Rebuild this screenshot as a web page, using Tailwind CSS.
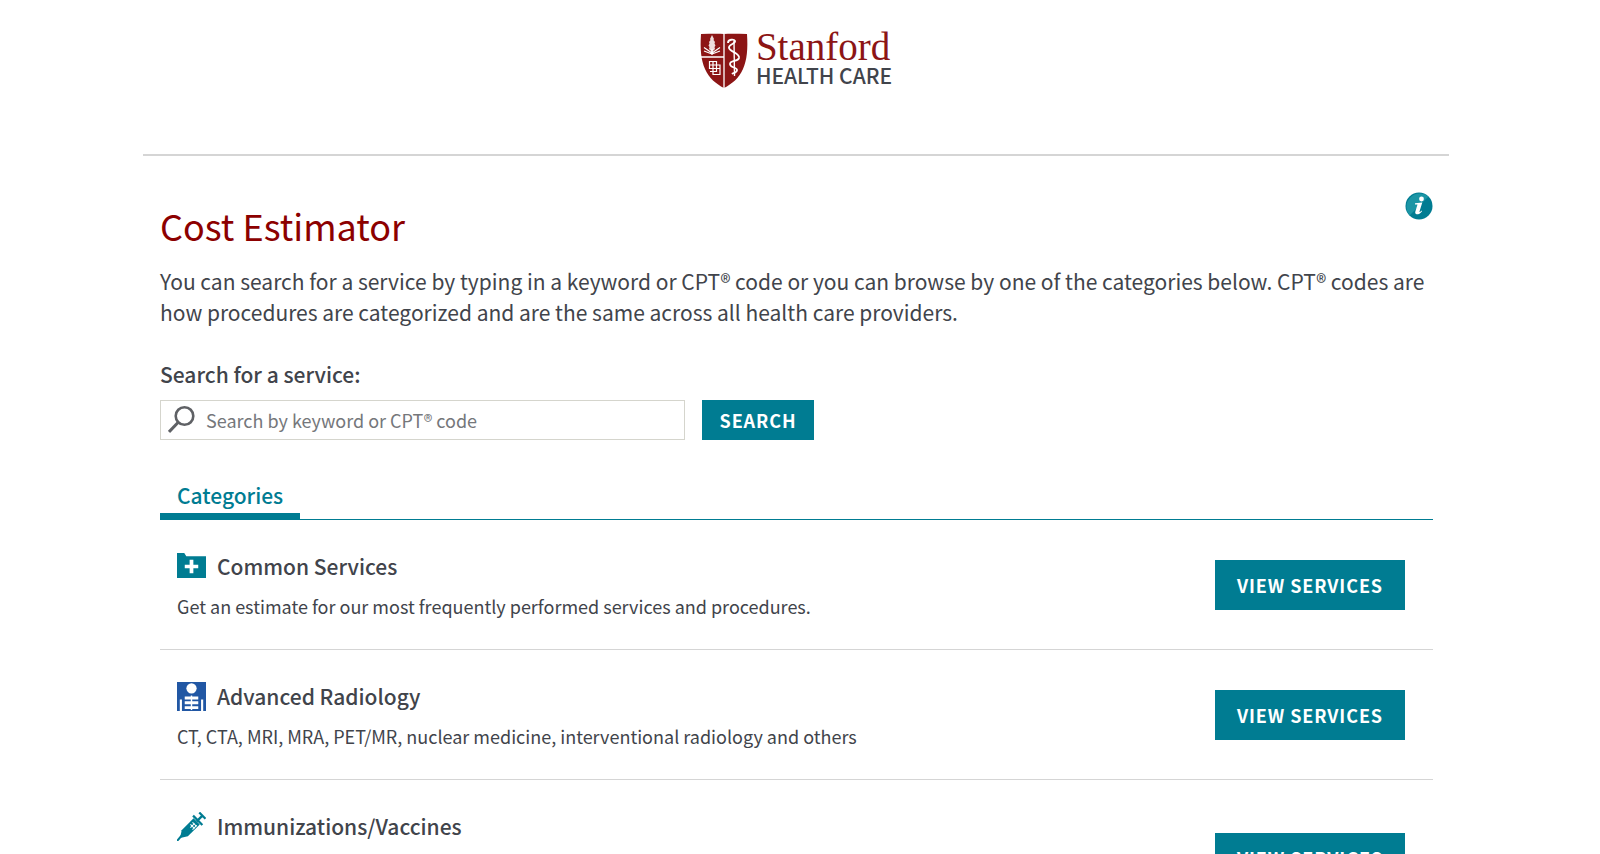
<!DOCTYPE html>
<html lang="en">

<head>
    <meta charset="UTF-8">
    <meta name="viewport" content="width=device-width, initial-scale=1.0">
    <title>Cost Estimator</title>
    <script src="https://cdn.jsdelivr.net/npm/@tailwindcss/browser@4"></script>
</head>

<body class="bg-white text-[#41444b] pr-2 font-['Noto_Sans_CJK_SC','Open_Sans',sans-serif]">

    <div class="w-full max-w-[1306px] mx-auto">

        <!-- header -->
        <header class="flex justify-center h-[156px] pt-8 border-b-2 border-[#d5d5d5]">
            <a href="#" class="flex items-start gap-2 h-14">
                <svg class="w-12 h-14" viewBox="0 0 48 56" fill="none">
                    <path d="M1 2C9 2 16 1.500 24 2C32 1.500 39 2 47 2C48 17 47 28 43 37C39 46 32 52 24 56C16 52 9 46 5 37C1 28 0 17 1 2Z" fill="#8c1515" />
                    <path d="M24 2V56M1 25H24" stroke="#fff" stroke-width="1.300" />
                    <!-- tree -->
                    <path d="M12 3L14 7L13.500 8L15 10L14.500 11.500L15.500 13.500L14.500 15L15 17L13 19L12.500 22H11.500L11 19L9 17L9.500 15L8.500 13.500L9.500 11.500L9 10L10.500 8L10 7Z" fill="#fff" fill-opacity=".85" />
                    <path d="M12 23V17M12 22L4 19M12 22L20 19M12 21L4 15.500M12 21L20 15.500" stroke="#fff" stroke-width="1.200" />
                    <!-- interlocked squares -->
                    <path d="M9.500 29.500H16.500V36.500H9.500ZM13 33H20V42.500H13ZM10 39.500H16.500V29.500M13 29.500V39.500M9.500 33H20M13 36.500H20" stroke="#fff" stroke-width="1.200" />
                    <!-- staff -->
                    <path d="M34 9L34.500 44" stroke="#fff" stroke-width="1.400" />
                    <path d="M28 11C28 7 34 7 35 9C36 12 28 12 29 16C30 20 40 21 39 26C38 30 30 28 30 32C30 36 37 35 37 38C37 41 33 41 32 42" stroke="#fff" stroke-width="1.800" />
                </svg>
                <span class="flex flex-col">
                    <span class="font-['Liberation_Serif',serif] text-[39px] leading-[30px] text-[#8c1515]">Stanford</span>
                    <span class="text-[21px] leading-[27px] font-medium">HEALTH CARE</span>
                </span>
            </a>
        </header>

        <main class="pl-[17px] pr-4">

            <!-- intro -->
            <div class="flex justify-between items-start pt-9">
                <h1 class="pt-[9px] text-4xl leading-12 text-[#8c0000]">Cost Estimator</h1>
                <button type="button" aria-label="Information" class="size-7">
                    <svg class="size-7" viewBox="0 0 28 28">
                        <circle cx="14" cy="14" r="13.500" fill="#007c92" />
                        <path d="M4.500 23.500A13.500 13.500 0 0 1 23.500 4.500Z" fill="#1b95a5" />
                        <circle cx="16.500" cy="7" r="2.400" fill="#fff" />
                        <path d="M10 11.300L17.300 10.500L14.500 19.500C14.300 20.500 15 20.200 16.500 18.500L17 19.200C15 22 13 22.500 11.500 22.300C10 22 10 20.500 10.500 19L12.500 12.600L10 12.500Z" fill="#fff" />
                    </svg>
                </button>
            </div>
            <p class="pt-[17px] text-[21px] leading-[31px]">You can search for a service by typing in a keyword or CPT® code or you can browse by one of the categories below. CPT® codes are how procedures are categorized and are the same across all health care providers.</p>

            <!-- search -->
            <form class="pt-[30px]">
                <label for="keyword" class="block text-[21px] leading-8 font-medium">Search for a service:</label>
                <div class="flex gap-[17px] pt-[10px]">
                    <div class="relative w-[525px]">
                        <svg class="absolute left-2 top-1 w-7 h-8" viewBox="0 0 28 32" fill="none" stroke="#5f6165">
                            <circle cx="16.500" cy="12" r="8.800" stroke-width="2.600" />
                            <path d="M10.500 18L1 28" stroke-width="3" />
                        </svg>
                        <input id="keyword" type="text" placeholder="Search by keyword or CPT® code" class="w-full h-10 pl-[45px] border border-[#d5d5cd] text-lg placeholder:text-[#75777b]">
                    </div>
                    <button type="button" class="h-10 w-28 bg-[#007c92] text-white text-lg leading-6 font-bold tracking-wider">SEARCH</button>
                </div>
            </form>

            <!-- tabs -->
            <div class="flex mt-[39px] border-b border-[#007c92]">
                <a href="#" class="px-[17px] pb-[2px] border-b-6 border-[#007c92] text-[21px] leading-8 font-medium text-[#007c92]">Categories</a>
            </div>

            <!-- categories -->
            <ul>
                <li class="flex items-center justify-between h-[130px] pl-[17px] pr-7 border-b border-[#d5d5d5]">
                    <div class="self-start pt-[30px]">
                        <h2 class="flex items-center gap-[11px] text-[21px] leading-8 font-medium">
                            <svg class="size-[29px]" viewBox="0 0 28 28">
                                <path d="M0 1H7L9 4H28V25H0Z" fill="#007c92" />
                                <path d="M14 7.500V20.500M7.500 14H20.500" stroke="#fff" stroke-width="3.600" />
                            </svg>
                            Common Services
                        </h2>
                        <p class="pt-[10px] text-lg leading-7">Get an estimate for our most frequently performed services and procedures.</p>
                    </div>
                    <button type="button" class="h-[50px] w-[190px] bg-[#007c92] text-white text-lg leading-6 font-bold tracking-wider">VIEW SERVICES</button>
                </li>
                <li class="flex items-center justify-between h-[130px] pl-[17px] pr-7 border-b border-[#d5d5d5]">
                    <div class="self-start pt-[30px]">
                        <h2 class="flex items-center gap-[11px] text-[21px] leading-8 font-medium">
                            <svg class="size-[29px]" viewBox="0 0 30 30">
                                <path d="M0 0H30V30H0Z" fill="#2157a4" />
                                <circle cx="15" cy="6.500" r="5.300" fill="#fff" />
                                <path d="M8 16.500H22M8 21.500H22M8 26.500H22" stroke="#fff" stroke-width="3" />
                                <path d="M4 30V18M26 30V18" stroke="#fff" stroke-width="2.200" />
                                <path d="M15 14V29" stroke="#fff" stroke-width="1.500" />
                            </svg>
                            Advanced Radiology
                        </h2>
                        <p class="pt-[10px] text-lg leading-7">CT, CTA, MRI, MRA, PET/MR, nuclear medicine, interventional radiology and others</p>
                    </div>
                    <button type="button" class="h-[50px] w-[190px] bg-[#007c92] text-white text-lg leading-6 font-bold tracking-wider">VIEW SERVICES</button>
                </li>
                <li class="flex items-center justify-between h-[157px] pl-[17px] pr-7 border-b border-[#d5d5d5]">
                    <div class="self-start pt-[30px]">
                        <h2 class="flex items-center gap-[11px] text-[21px] leading-8 font-medium">
                            <svg class="size-[29px]" viewBox="0 0 28 28" fill="none" stroke="#007c92">
                                <path d="M0 28L6 21" stroke-width="2" />
                                <path d="M3 25L4.500 17.500L16 6L22 12L10.500 23.500Z" fill="#007c92" stroke="none" />
                                <path d="M15.500 3.500L24.500 12.500M19 9L25 3M21.500 0.500L27.500 6.500" stroke-width="2.200" />
                                <path d="M13 12L17 16M15 10L19 14M13 15L17 11M15 17L19 13" stroke="#fff" stroke-width="1" />
                            </svg>
                            Immunizations/Vaccines
                        </h2>
                    </div>
                    <button type="button" class="h-[50px] w-[190px] bg-[#007c92] text-white text-lg leading-6 font-bold tracking-wider">VIEW SERVICES</button>
                </li>
            </ul>

        </main>
    </div>

</body>

</html>
